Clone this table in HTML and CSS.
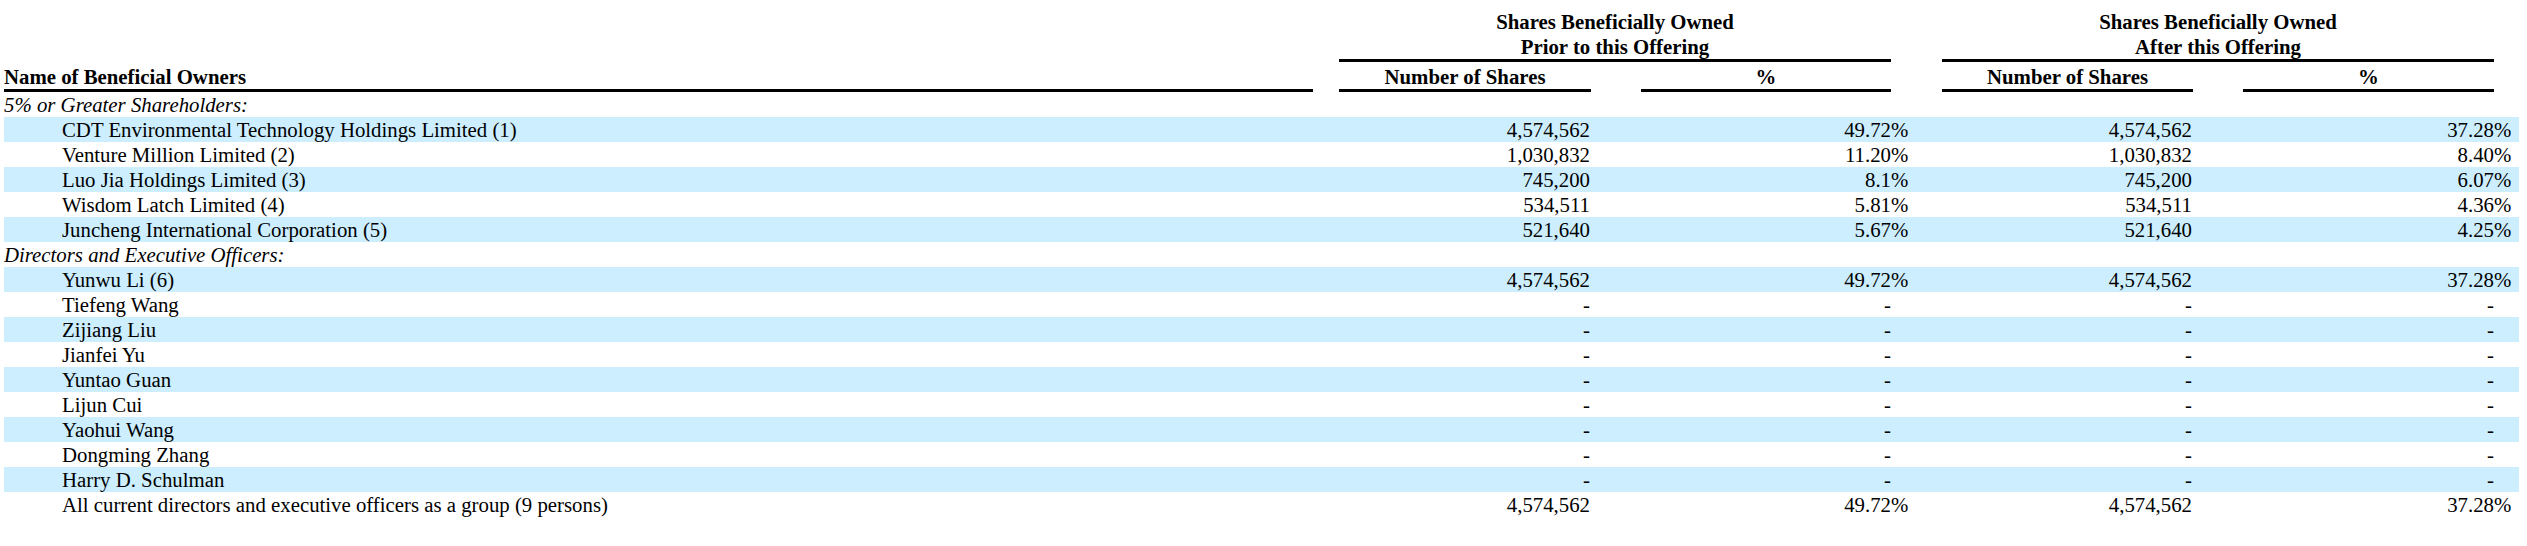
FILE: index.html
```html
<!DOCTYPE html>
<html lang="en">
<head>
<meta charset="utf-8">
<title>Beneficial Ownership</title>
<link rel="stylesheet" href="styles.css">
</head>
<body>
<div class="sheet">
  <div class="grid head">
    <div class="group g1">Shares Beneficially Owned<br>Prior to this Offering</div>
    <div class="group g2">Shares Beneficially Owned<br>After this Offering</div>
    <div class="hcell c-name left">Name of Beneficial Owners</div>
    <div class="hcell c-n1">Number of Shares</div>
    <div class="hcell c-p1">%</div>
    <div class="hcell c-n2">Number of Shares</div>
    <div class="hcell c-p2">%</div>
  </div>

  <div class="grid row"><div class="c-name section">5% or Greater Shareholders:</div></div>
  <div class="grid row band"><div class="c-name indent">CDT Environmental Technology Holdings Limited (1)</div><div class="c-n1 num">4,574,562</div><div class="c-p1 num">49.72</div><div class="c-s1">%</div><div class="c-n2 num">4,574,562</div><div class="c-p2 num">37.28</div><div class="c-s2">%</div></div>
  <div class="grid row"><div class="c-name indent">Venture Million Limited (2)</div><div class="c-n1 num">1,030,832</div><div class="c-p1 num">11.20</div><div class="c-s1">%</div><div class="c-n2 num">1,030,832</div><div class="c-p2 num">8.40</div><div class="c-s2">%</div></div>
  <div class="grid row band"><div class="c-name indent">Luo Jia Holdings Limited (3)</div><div class="c-n1 num">745,200</div><div class="c-p1 num">8.1</div><div class="c-s1">%</div><div class="c-n2 num">745,200</div><div class="c-p2 num">6.07</div><div class="c-s2">%</div></div>
  <div class="grid row"><div class="c-name indent">Wisdom Latch Limited (4)</div><div class="c-n1 num">534,511</div><div class="c-p1 num">5.81</div><div class="c-s1">%</div><div class="c-n2 num">534,511</div><div class="c-p2 num">4.36</div><div class="c-s2">%</div></div>
  <div class="grid row band"><div class="c-name indent">Juncheng International Corporation (5)</div><div class="c-n1 num">521,640</div><div class="c-p1 num">5.67</div><div class="c-s1">%</div><div class="c-n2 num">521,640</div><div class="c-p2 num">4.25</div><div class="c-s2">%</div></div>
  <div class="grid row"><div class="c-name section">Directors and Executive Officers:</div></div>
  <div class="grid row band"><div class="c-name indent">Yunwu Li (6)</div><div class="c-n1 num">4,574,562</div><div class="c-p1 num">49.72</div><div class="c-s1">%</div><div class="c-n2 num">4,574,562</div><div class="c-p2 num">37.28</div><div class="c-s2">%</div></div>
  <div class="grid row"><div class="c-name indent">Tiefeng Wang</div><div class="c-n1 num">-</div><div class="c-p1 num">-</div><div class="c-n2 num">-</div><div class="c-p2 num">-</div></div>
  <div class="grid row band"><div class="c-name indent">Zijiang Liu</div><div class="c-n1 num">-</div><div class="c-p1 num">-</div><div class="c-n2 num">-</div><div class="c-p2 num">-</div></div>
  <div class="grid row"><div class="c-name indent">Jianfei Yu</div><div class="c-n1 num">-</div><div class="c-p1 num">-</div><div class="c-n2 num">-</div><div class="c-p2 num">-</div></div>
  <div class="grid row band"><div class="c-name indent">Yuntao Guan</div><div class="c-n1 num">-</div><div class="c-p1 num">-</div><div class="c-n2 num">-</div><div class="c-p2 num">-</div></div>
  <div class="grid row"><div class="c-name indent">Lijun Cui</div><div class="c-n1 num">-</div><div class="c-p1 num">-</div><div class="c-n2 num">-</div><div class="c-p2 num">-</div></div>
  <div class="grid row band"><div class="c-name indent">Yaohui Wang</div><div class="c-n1 num">-</div><div class="c-p1 num">-</div><div class="c-n2 num">-</div><div class="c-p2 num">-</div></div>
  <div class="grid row"><div class="c-name indent">Dongming Zhang</div><div class="c-n1 num">-</div><div class="c-p1 num">-</div><div class="c-n2 num">-</div><div class="c-p2 num">-</div></div>
  <div class="grid row band"><div class="c-name indent">Harry D. Schulman</div><div class="c-n1 num">-</div><div class="c-p1 num">-</div><div class="c-n2 num">-</div><div class="c-p2 num">-</div></div>
  <div class="grid row"><div class="c-name indent">All current directors and executive officers as a group (9 persons)</div><div class="c-n1 num">4,574,562</div><div class="c-p1 num">49.72</div><div class="c-s1">%</div><div class="c-n2 num">4,574,562</div><div class="c-p2 num">37.28</div><div class="c-s2">%</div></div>
</div>
</body>
</html>
```
FILE: styles.css
```css
html, body {
  margin: 0;
  padding: 0;
  background: #ffffff;
}
body {
  font-family: "Liberation Serif", "Times New Roman", serif;
  font-size: 20.8px;
  color: #000000;
}
.sheet {
  padding: 9px 0 0 4px;
}
.grid {
  display: grid;
  grid-template-columns: 1309px 26px 252px 50px 250px 51px 251px 50px 251px 25px;
  width: 2515px;
}
.head {
  font-weight: bold;
  line-height: 25px;
}
.group {
  grid-row: 1;
  text-align: center;
  border-bottom: 3px solid #000000;
}
.g1 { grid-column: 3 / 6; }
.g2 { grid-column: 7 / 10; }
.hcell {
  grid-row: 2;
  text-align: center;
  padding-top: 2px;
  border-bottom: 3px solid #000000;
  white-space: nowrap;
}
.hcell.left { text-align: left; }
.row {
  height: 25px;
  line-height: 25px;
  white-space: nowrap;
}
.band {
  background: #cceeff;
}
.c-name { grid-column: 1; }
.c-n1 { grid-column: 3; }
.c-p1 { grid-column: 5; }
.c-s1 { grid-column: 6; }
.c-n2 { grid-column: 7; }
.c-p2 { grid-column: 9; }
.c-s2 { grid-column: 10; }
.num {
  text-align: right;
}
.row .c-n1, .row .c-n2 {
  padding-right: 1px;
}
.section {
  font-style: italic;
}
.indent {
  padding-left: 58px;
}
```
